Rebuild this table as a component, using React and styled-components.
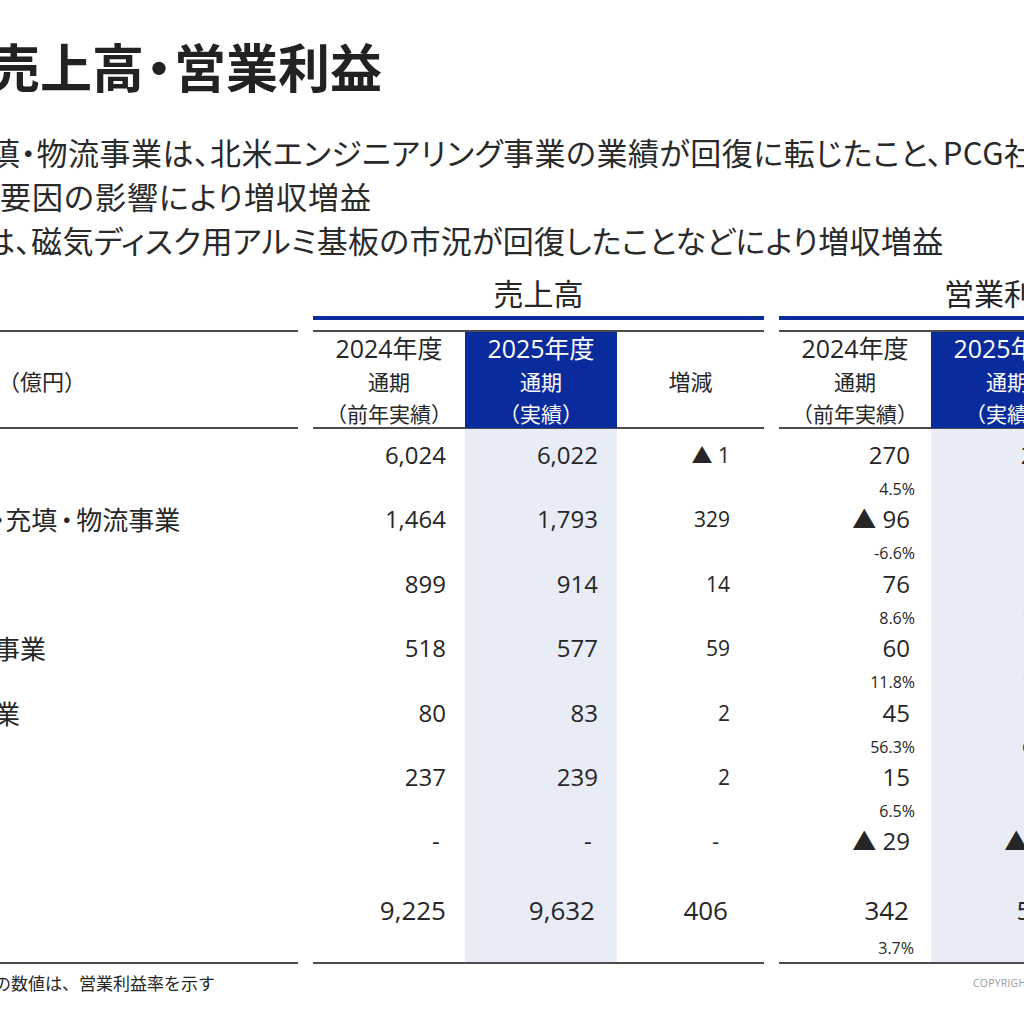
import React from "react";
import styled, { createGlobalStyle } from "styled-components";

const BLUE = "#0a2b9b";
const LIGHT = "#e8ecf6";
const RULE = "#4d4d4d";
const INK = "#262626";
const JP = `"Noto Sans CJK JP", sans-serif`;
const NUM = `"Open Sans", "Noto Sans CJK JP", sans-serif`;

const GlobalStyle = createGlobalStyle`
  html, body { margin: 0; padding: 0; background: #fff; }
  body { width: 1024px; height: 1024px; overflow: hidden; font-family: ${JP}; color: ${INK}; }
`;

const Slide = styled.div`
  width: 1024px;
  height: 1024px;
  overflow: hidden;
  background: #fff;
  display: flex;
  flex-direction: column;
`;

const Title = styled.h1`
  margin: 36px 0 0 ${(p) => -p.$bleed}px;
  font-family: ${JP};
  font-size: 52px;
  line-height: 60px;
  font-weight: 700;
  color: #222;
  white-space: nowrap;
  font-feature-settings: "palt";
`;

const Dot = styled.span`
  margin-left: ${(p) => p.$l ?? 2}px;
  margin-right: ${(p) => p.$r ?? 2}px;
`;

const Squeeze = styled.span`
  letter-spacing: ${(p) => p.$ls}px;
`;

const Lead = styled.div`
  margin-top: 34px;
  display: flex;
  flex-direction: column;
`;

const LeadLine = styled.p`
  margin: 0 0 0 ${(p) => -p.$bleed}px;
  font-family: ${JP};
  font-size: 31px;
  line-height: 44px;
  letter-spacing: ${(p) => p.$ls ?? 0.5}px;
  color: #2a2a2a;
  white-space: nowrap;
  font-feature-settings: "palt";
`;

const Table = styled.div`
  display: flex;
  gap: 15px;
  margin-left: -170px;
`;

const Group = styled.div`
  flex: 0 0 ${(p) => p.$w}px;
  display: flex;
  flex-direction: column;
`;

const Caption = styled.div`
  height: 54px;
  box-sizing: border-box;
  padding-top: 6px;
  display: flex;
  align-items: center;
  justify-content: center;
  font-family: ${JP};
  font-size: 30px;
  color: ${INK};
  white-space: nowrap;
`;

const Bar = styled.div`
  height: 4px;
  margin-bottom: 10px;
  background: ${(p) => (p.$on ? BLUE : "transparent")};
`;

const HeadRow = styled.div`
  display: grid;
  grid-template-columns: ${(p) => p.$cols};
  height: 95px;
  border-top: 2px solid ${RULE};
  border-bottom: 2px solid ${RULE};
`;

const HeadCell = styled.div`
  display: flex;
  flex-direction: column;
  align-items: center;
  justify-content: ${(p) => (p.$single ? "center" : "flex-start")};
  background: ${(p) => (p.$hl ? BLUE : "transparent")};
  color: ${(p) => (p.$hl ? "#fff" : INK)};
  white-space: nowrap;
`;

const HeadMain = styled.div`
  font-family: ${NUM};
  font-size: 25px;
  line-height: 33px;
`;

const HeadSub = styled.div`
  font-family: ${JP};
  font-size: ${(p) => p.$size || 21}px;
  line-height: ${(p) => p.$lh || 33}px;
`;

const Unit = styled.div`
  display: flex;
  align-items: center;
  padding-left: 168px;
  font-family: ${JP};
  font-size: 22px;
  color: ${INK};
`;

const Body = styled.div`
  display: flex;
  flex-direction: column;
  border-bottom: 2px solid ${RULE};
`;

const Row = styled.div`
  display: grid;
  grid-template-columns: ${(p) => p.$cols};
  height: ${(p) => (p.$total ? 82 : 64.4)}px;
`;

const Cell = styled.div`
  display: flex;
  flex-direction: column;
  align-items: flex-end;
  box-sizing: border-box;
  padding-top: ${(p) => (p.$total ? 12 : 10)}px;
  padding-right: ${(p) => p.$pr}px;
  background: ${(p) => (p.$hl ? LIGHT : "transparent")};
  white-space: pre;
`;

const Value = styled.div`
  font-family: ${NUM};
  font-size: ${(p) => p.$size}px;
  line-height: ${(p) => (p.$total ? 36 : 32)}px;
  color: ${INK};
`;

const Pct = styled.div`
  font-family: ${NUM};
  font-size: 16px;
  line-height: 18px;
  margin-top: ${(p) => (p.$total ? 11 : 9)}px;
  margin-right: -5px;
  color: ${INK};
`;

const LabelCell = styled.div`
  box-sizing: border-box;
  padding: 10px 0 0 8px;
  font-family: ${JP};
  font-size: 26px;
  line-height: 32px;
  color: ${INK};
  white-space: nowrap;
  font-feature-settings: "palt";
`;

const Footer = styled.div`
  display: flex;
  align-items: center;
  margin-top: 9px;
  height: 20px;
  white-space: nowrap;
`;

const Note = styled.div`
  flex: 0 0 ${(p) => 973 + p.$bleed}px;
  margin-left: ${(p) => -p.$bleed}px;
  font-family: ${JP};
  font-size: 17px;
  line-height: 20px;
  color: ${INK};
`;

const Copyright = styled.div`
  flex: 0 0 auto;
  font-family: "Open Sans", sans-serif;
  font-size: 10.5px;
  letter-spacing: 0.2px;
  color: #9a9a9a;
`;

const rows = [
  { key: "pkg", label: "包装容器事業", s: ["6,024", "6,022", "▲ 1"], p: [["270", "4.5%"], ["283", "4.7%"], ["13", ""]] },
  {
    key: "eng",
    label: (
      <>
        <Squeeze $ls={-4.8}>エンジニアリング</Squeeze>
        <Dot $l={3} $r={0}>・</Dot>充填<Dot $l={3} $r={3}>・</Dot>物流事業
      </>
    ),
    s: ["1,464", "1,793", "329"],
    p: [["▲ 96", "-6.6%"], ["23", "1.3%"], ["119", ""]],
  },
  { key: "steel", label: "鋼板関連事業", s: ["899", "914", "14"], p: [["76", "8.6%"], ["98", "10.7%"], ["22", ""]] },
  { key: "func", label: "機能材料関連事業", s: ["518", "577", "59"], p: [["60", "11.8%"], ["69", "12.0%"], ["9", ""]] },
  { key: "estate", label: "不動産関連事業", s: ["80", "83", "2"], p: [["45", "56.3%"], ["52", "62.7%"], ["7", ""]] },
  { key: "other", label: "その他", s: ["237", "239", "2"], p: [["15", "6.5%"], ["18", "7.5%"], ["3", ""]] },
  { key: "adj", label: "消去又は全社", s: ["-\u00a0", "-\u00a0", "-\u00a0\u00a0"], p: [["▲ 29", ""], ["▲ 33", ""], ["▲ 4", ""]] },
];
const total = { key: "total", label: "合計", s: ["9,225", "9,632", "406"], p: [["342", "3.7%"], ["510", "5.3%"], ["168", ""]] };

const SALES_COLS = "152px 152px 147px";
const PROFIT_COLS = "152px 152px 146px";

function HeaderCells({ cols }) {
  return (
    <HeadRow $cols={cols}>
      <HeadCell>
        <HeadMain>2024年度</HeadMain>
        <HeadSub>通期</HeadSub>
        <HeadSub $lh={30}>（前年実績）</HeadSub>
      </HeadCell>
      <HeadCell $hl>
        <HeadMain>2025年度</HeadMain>
        <HeadSub>通期</HeadSub>
        <HeadSub $lh={30}>（実績）</HeadSub>
      </HeadCell>
      <HeadCell $single>
        <HeadSub $size={22}>増減</HeadSub>
      </HeadCell>
    </HeadRow>
  );
}

export default function App() {
  const all = [...rows, { ...total, total: true }];
  return (
    <>
      <GlobalStyle />
      <Slide>
        <Title $bleed={12}>
          売上高<Dot>・</Dot>営業利益
        </Title>
        <Lead>
          <LeadLine $bleed={11}>填・物流事業は、北米エンジニアリング事業の業績が回復に転じたこと、PCG社の</LeadLine>
          <LeadLine $bleed={0} $ls={1}>要因の影響により増収増益</LeadLine>
          <LeadLine $bleed={16} $ls={0.3}>は、磁気ディスク用アルミ基板の市況が回復したことなどにより増収増益</LeadLine>
        </Lead>
        <Table>
          <Group $w={468}>
            <Caption />
            <Bar />
            <HeadRow $cols="1fr">
              <Unit>（億円）</Unit>
            </HeadRow>
            <Body>
              {all.map((r) => (
                <Row key={r.key} $cols="1fr" $total={r.total}>
                  <LabelCell>{r.label}</LabelCell>
                </Row>
              ))}
            </Body>
          </Group>
          <Group $w={451}>
            <Caption>売上高</Caption>
            <Bar $on />
            <HeaderCells cols={SALES_COLS} />
            <Body>
              {all.map((r) => (
                <Row key={r.key} $cols={SALES_COLS} $total={r.total}>
                  <Cell $pr={19} $total={r.total}>
                    <Value $size={r.total ? 26 : 24} $total={r.total}>{r.s[0]}</Value>
                  </Cell>
                  <Cell $pr={r.total ? 22 : 19} $hl $total={r.total}>
                    <Value $size={r.total ? 26 : 24} $total={r.total}>{r.s[1]}</Value>
                  </Cell>
                  <Cell $pr={r.total ? 36 : 34} $total={r.total}>
                    <Value $size={r.total ? 26 : 21} $total={r.total}>{r.s[2]}</Value>
                  </Cell>
                </Row>
              ))}
            </Body>
          </Group>
          <Group $w={450}>
            <Caption>営業利益</Caption>
            <Bar $on />
            <HeaderCells cols={PROFIT_COLS} />
            <Body>
              {all.map((r) => (
                <Row key={r.key} $cols={PROFIT_COLS} $total={r.total}>
                  {r.p.map(([v, pct], i) => (
                    <Cell key={i} $pr={r.total ? 22 : 21} $hl={i === 1} $total={r.total}>
                      <Value $size={r.total ? 26 : 24} $total={r.total}>{v}</Value>
                      {pct && <Pct $total={r.total}>{pct}</Pct>}
                    </Cell>
                  ))}
                </Row>
              ))}
            </Body>
          </Group>
        </Table>
        <Footer>
          <Note $bleed={40}>下段の数値は、営業利益率を示す</Note>
          <Copyright>COPYRIGHT © TOYO SEIKAN GROUP HOLDINGS, LTD. ALL RIGHTS RESERVED.</Copyright>
        </Footer>
      </Slide>
    </>
  );
}
